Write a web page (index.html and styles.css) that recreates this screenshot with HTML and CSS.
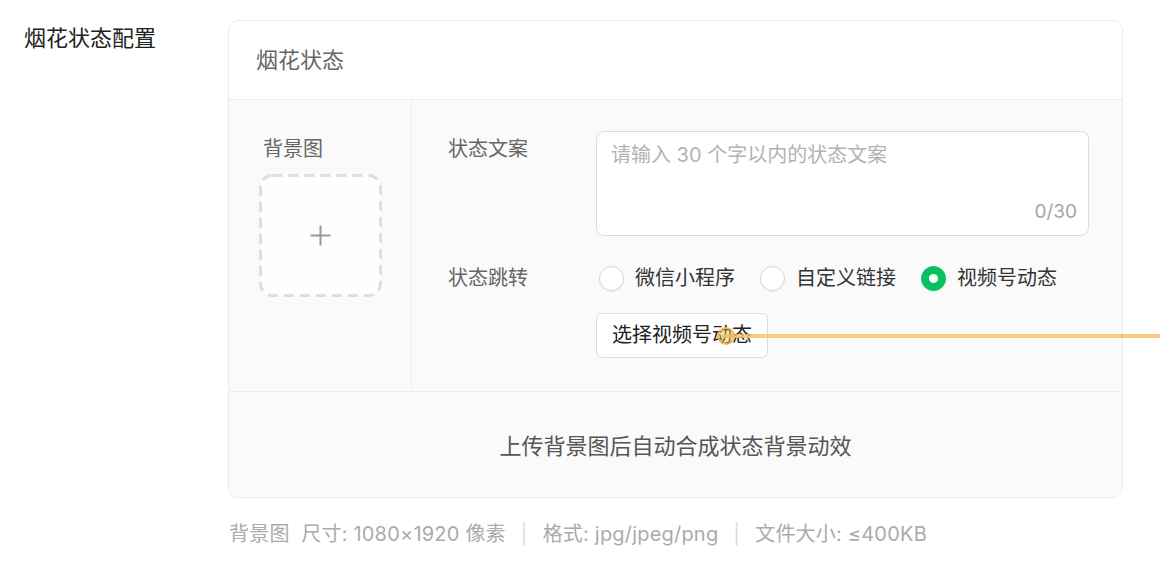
FILE: index.html
```html
<!DOCTYPE html>
<html lang="zh-CN">
<head>
<meta charset="utf-8">
<title>烟花状态配置</title>
<link rel="stylesheet" href="styles.css">
</head>
<body>
<div class="row">
  <div class="form-label">烟花状态配置</div>
  <div class="field">
    <div class="card">
      <div class="card-header">烟花状态</div>
      <div class="card-body">
        <div class="left-col">
          <div class="col-label">背景图</div>
          <svg class="upload" width="123" height="123" viewBox="0 0 123 123">
            <rect x="1.5" y="1.5" width="120" height="120" rx="12" ry="12" fill="#fefefe" stroke="#dedede" stroke-width="3" stroke-dasharray="10 6"/>
            <path d="M51.5 61.5h20M61.5 51.5v20" stroke="#999" stroke-width="2" fill="none"/>
          </svg>
        </div>
        <div class="right-col">
          <div class="item-label">状态文案</div>
          <div class="textarea">
            <div class="placeholder">请输入 30 个字以内的状态文案</div>
            <div class="counter">0/30</div>
          </div>
          <div class="item-label label-mid">状态跳转</div>
          <div class="control">
            <div class="radios">
              <label class="radio"><span class="dot"></span><span class="radio-text">微信小程序</span></label>
              <label class="radio"><span class="dot"></span><span class="radio-text">自定义链接</span></label>
              <label class="radio checked"><span class="dot"></span><span class="radio-text">视频号动态</span></label>
            </div>
            <div class="btn">选择视频号动态</div>
          </div>
        </div>
      </div>
      <div class="card-footer">上传背景图后自动合成状态背景动效</div>
    </div>
    <div class="hint">背景图&nbsp; 尺寸: 1080×1920 像素<span class="sep">|</span>格式: jpg/jpeg/png<span class="sep">|</span>文件大小: ≤400KB</div>
  </div>
</div>
<div class="annot-line"></div>
<div class="annot-dot"></div>
</body>
</html>
```
FILE: styles.css
```css
* { box-sizing: border-box; }
html, body { margin: 0; padding: 0; background: #fff; }
body {
  font-family: "Inter", "Noto Sans CJK SC", sans-serif;
  color: #333;
  width: 1160px;
  height: 580px;
  overflow: hidden;
  position: relative;
}
.row {
  display: flex;
  padding: 20px 0 0 24px;
}
.form-label {
  width: 204px;
  flex: none;
  font-size: 22px;
  line-height: 36px;
  color: #222;
}
.field { width: 895px; flex: none; }
.card {
  border: 1px solid #ebebeb;
  border-radius: 10px;
  overflow: hidden;
}
.card-header {
  height: 79px;
  line-height: 79px;
  padding-left: 27px;
  font-size: 22px;
  color: #666;
  background: #fff;
  border-bottom: 1px solid #ececec;
}
.card-body {
  display: flex;
  background: #fafafa;
  border-bottom: 1px solid #ececec;
}
.left-col {
  width: 183px;
  flex: none;
  border-right: 1px solid #ececec;
  padding: 34px 0 0 30px;
  display: flex;
  flex-direction: column;
  align-items: flex-start;
}
.col-label {
  font-size: 20px;
  line-height: 30px;
  color: #666;
  margin-left: 4px;
}
.upload { display: block; margin-top: 10px; }
.right-col {
  flex: 1;
  display: grid;
  grid-template-columns: 148px 493px;
  padding: 31px 0 33px 36px;
  align-content: start;
}
.item-label {
  font-size: 20px;
  line-height: 30px;
  color: #666;
  margin-top: 3px;
}
.label-mid { margin-top: 27px; }
.textarea {
  height: 105px;
  background: #fff;
  border: 1px solid #dcdcdc;
  border-radius: 8px;
  padding: 9px 11px 11px 14px;
  display: flex;
  flex-direction: column;
  justify-content: space-between;
}
.placeholder {
  font-size: 20px;
  line-height: 28px;
  color: #b3b3b3;
}
.counter {
  align-self: flex-end;
  font-size: 19px;
  line-height: 24px;
  color: #a6a6a6;
}
.control {
  display: flex;
  flex-direction: column;
  align-items: flex-start;
}
.radios {
  display: flex;
  gap: 22px;
  margin-top: 27px;
  height: 30px;
  align-items: center;
}
.radio {
  display: flex;
  align-items: center;
  gap: 11px;
}
.dot {
  width: 25px;
  height: 25px;
  border-radius: 50%;
  border: 1px solid #d6d6d6;
  background: #fff;
  box-shadow: 0 1px 1px rgba(0,0,0,0.06);
  display: flex;
  align-items: center;
  justify-content: center;
  margin-left: 3px;
}
.radio.checked .dot {
  background: #07c160;
  border-color: #07c160;
}
.radio.checked .dot::after {
  content: "";
  width: 9px;
  height: 9px;
  border-radius: 50%;
  background: #fff;
}
.radio-text {
  font-size: 20px;
  line-height: 30px;
  color: #333;
}
.btn {
  margin-top: 20px;
  height: 45px;
  line-height: 43px;
  padding: 0 15px;
  border: 1px solid #dcdcdc;
  border-radius: 6px;
  background: #fff;
  font-size: 20px;
  color: #222;
}
.card-footer {
  height: 105px;
  line-height: 105px;
  padding-top: 2px;
  text-align: center;
  font-size: 22px;
  color: #555;
  background: #fafafa;
}
.hint {
  margin-top: 21px;
  padding-left: 1px;
  font-size: 20px;
  line-height: 30px;
  color: #ababab;
  letter-spacing: 0.2px;
}
.sep {
  color: #dddddd;
  margin: 0 15px;
}
.annot-line {
  position: absolute;
  left: 722px;
  top: 334px;
  width: 438px;
  height: 4px;
  background: rgba(243, 192, 90, 0.8);
}
.annot-dot {
  position: absolute;
  left: 717px;
  top: 327px;
  width: 18px;
  height: 18px;
  border-radius: 50%;
  background: rgba(245, 195, 90, 0.45);
  border: 2px solid rgba(240, 180, 60, 0.75);
}
```
